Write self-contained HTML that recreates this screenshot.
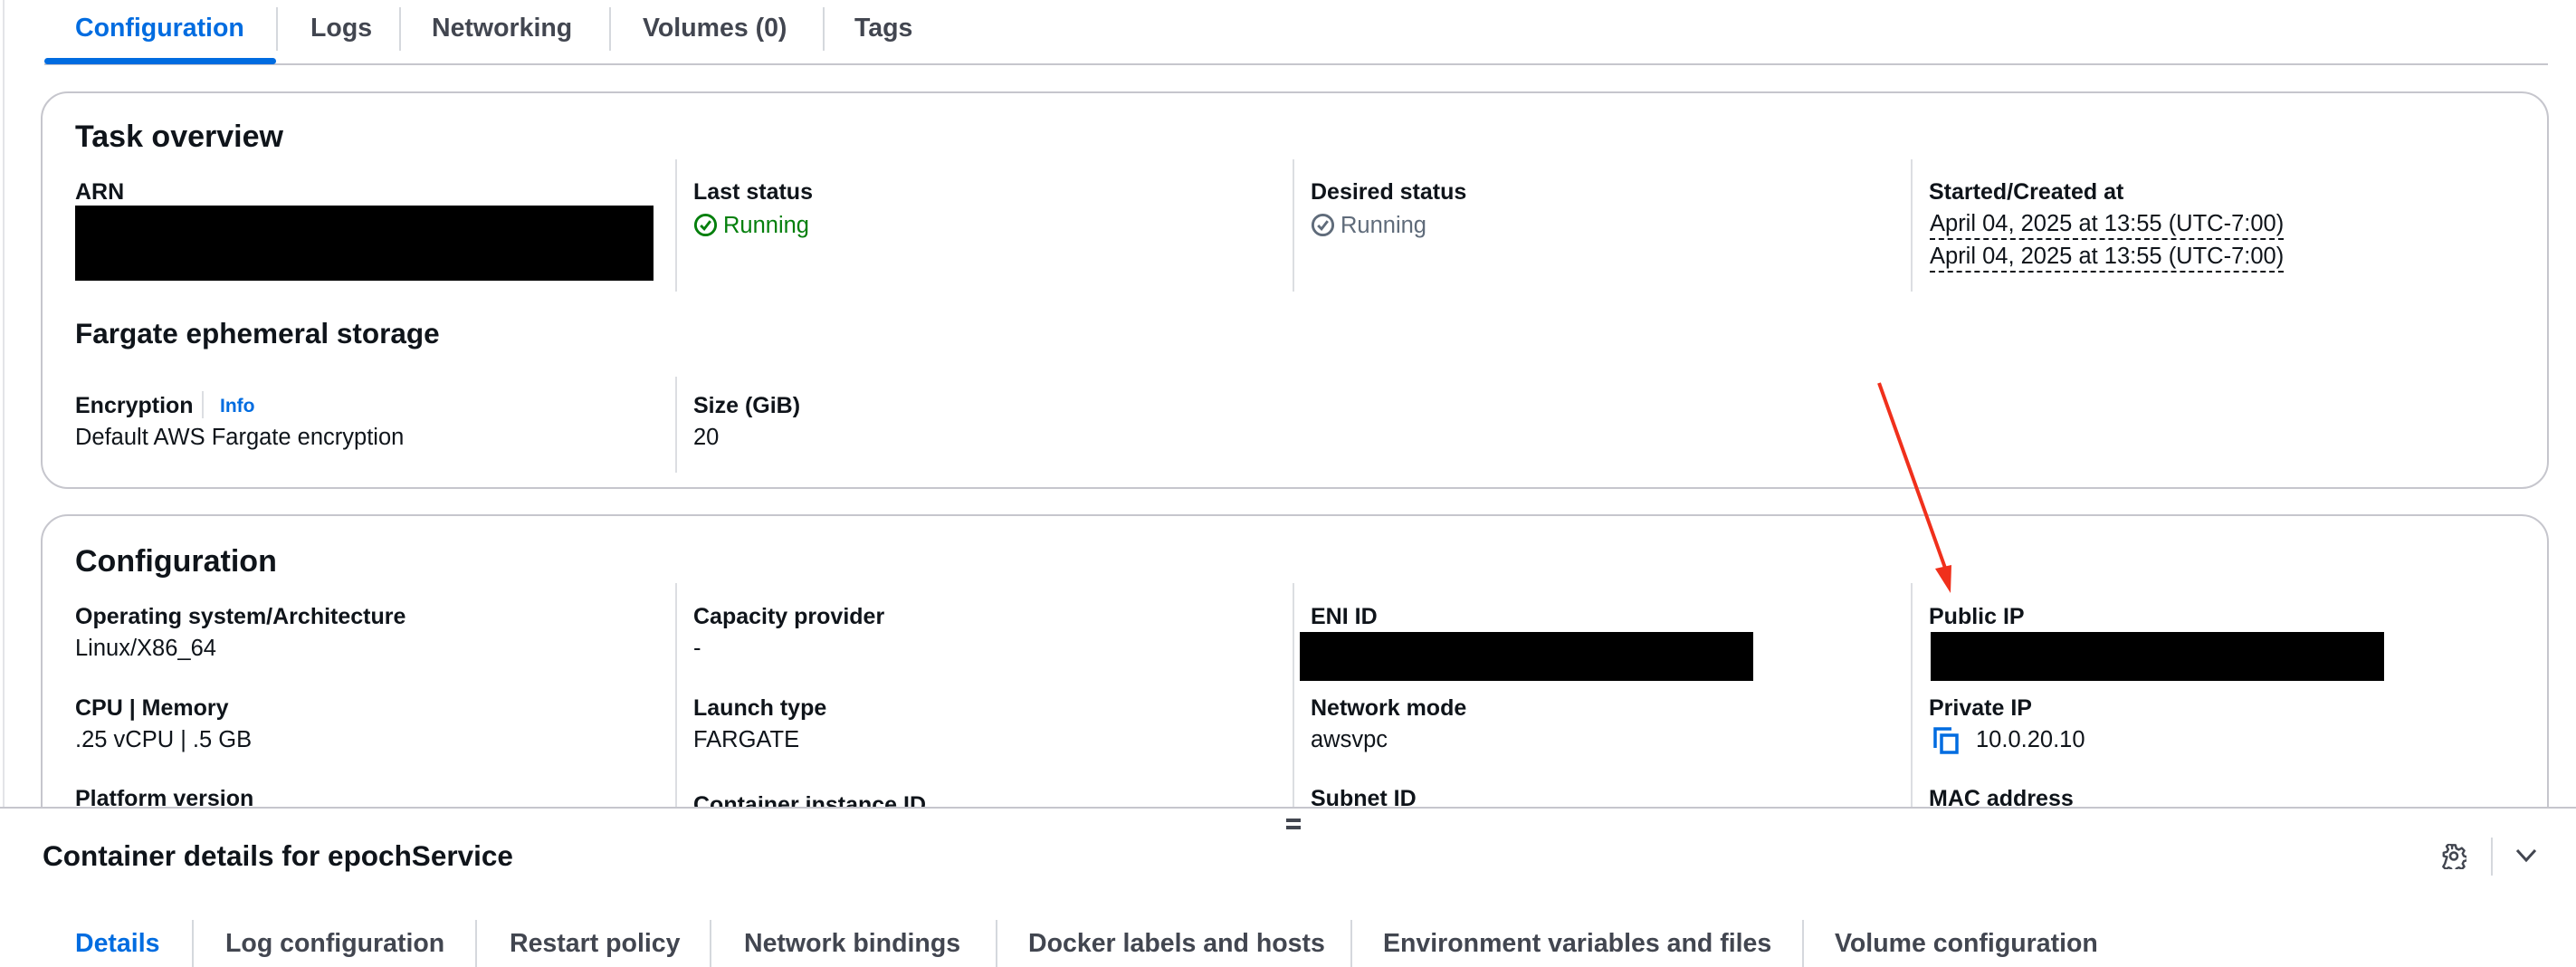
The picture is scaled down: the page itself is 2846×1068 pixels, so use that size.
<!DOCTYPE html>
<html><head><meta charset="utf-8"><style>
*{margin:0;padding:0;box-sizing:border-box}
body{width:2846px;height:1068px;overflow:hidden;background:#fff;font-family:"Liberation Sans",Arial,sans-serif;color:#0f141a;position:relative}
.a{position:absolute;white-space:nowrap;line-height:1}
.tab{font-size:28.5px;font-weight:bold;color:#424650;top:17px}
.sep{position:absolute;width:2px;background:#d5d8dd}
.card{position:absolute;border:2px solid #c6c6cd;border-radius:30px;background:#fff}
.h{font-size:34px;font-weight:bold}
.l{font-size:25px;font-weight:bold}
.v{font-size:25.5px}
.vd{position:absolute;width:2px;background:#dcdee2}
.blk{position:absolute;background:#000}
.dash{border-bottom:2px dashed #0f141a;padding-bottom:2px}
.bt{font-size:28.5px;font-weight:bold;color:#424650;top:1028px}
</style></head><body>
<div style="position:absolute;left:3px;top:0;width:2px;height:891px;background:#e3e4e8"></div>
<div class="a tab" style="left:83px;color:#006ce0">Configuration</div>
<div class="a tab" style="left:343px">Logs</div>
<div class="a tab" style="left:477px">Networking</div>
<div class="a tab" style="left:710px">Volumes (0)</div>
<div class="a tab" style="left:944px">Tags</div>
<div class="sep" style="left:305px;top:8px;height:48px"></div>
<div class="sep" style="left:441px;top:8px;height:48px"></div>
<div class="sep" style="left:673px;top:8px;height:48px"></div>
<div class="sep" style="left:909px;top:8px;height:48px"></div>
<div style="position:absolute;left:49px;top:70px;width:2766px;height:2px;background:#c6c6cd"></div>
<div style="position:absolute;left:49px;top:64px;width:256px;height:7px;border-radius:4px;background:#006ce0"></div>

<div class="card" style="left:45px;top:101px;width:2771px;height:439px"></div>
<div class="a h" style="left:83px;top:134px">Task overview</div>
<div class="vd" style="left:746px;top:176px;height:146px"></div>
<div class="vd" style="left:1428px;top:176px;height:146px"></div>
<div class="vd" style="left:2111px;top:176px;height:146px"></div>
<div class="a l" style="left:83px;top:200px">ARN</div>
<div class="blk" style="left:83px;top:227px;width:639px;height:83px"></div>
<div class="a l" style="left:766px;top:200px">Last status</div>
<div class="a v" style="left:766px;top:235px;color:#037f0c"><svg width="27" height="27" viewBox="0 0 28 28" style="vertical-align:-5px;margin-right:6px"><circle cx="14" cy="14" r="11.5" fill="none" stroke="#037f0c" stroke-width="3"/><path d="M8.5 14.5l4 4 7-9" fill="none" stroke="#037f0c" stroke-width="3"/></svg>Running</div>
<div class="a l" style="left:1448px;top:200px">Desired status</div>
<div class="a v" style="left:1448px;top:235px;color:#5f6b7a"><svg width="27" height="27" viewBox="0 0 28 28" style="vertical-align:-5px;margin-right:6px"><circle cx="14" cy="14" r="11.5" fill="none" stroke="#5f6b7a" stroke-width="3"/><path d="M8.5 14.5l4 4 7-9" fill="none" stroke="#5f6b7a" stroke-width="3"/></svg>Running</div>
<div class="a l" style="left:2131px;top:200px">Started/Created at</div>
<div class="a v" style="left:2132px;top:235px"><span class="dash">April 04, 2025 at 13:55 (UTC-7:00)</span></div>
<div class="a v" style="left:2132px;top:271px"><span class="dash">April 04, 2025 at 13:55 (UTC-7:00)</span></div>
<div class="a h" style="left:83px;top:353px;font-size:31.5px">Fargate ephemeral storage</div>
<div class="vd" style="left:746px;top:416px;height:106px"></div>
<div class="a l" style="left:83px;top:436px">Encryption</div>
<div class="vd" style="left:223px;top:432px;height:30px"></div>
<div class="a" style="left:243px;top:438px;font-size:21px;font-weight:bold;color:#006ce0">Info</div>
<div class="a v" style="left:83px;top:471px">Default AWS Fargate encryption</div>
<div class="a l" style="left:766px;top:436px">Size (GiB)</div>
<div class="a v" style="left:766px;top:471px">20</div>

<div class="card" style="left:45px;top:568px;width:2771px;height:500px"></div>
<div class="a h" style="left:83px;top:603px">Configuration</div>
<div class="vd" style="left:746px;top:644px;height:250px"></div>
<div class="vd" style="left:1428px;top:644px;height:250px"></div>
<div class="vd" style="left:2111px;top:644px;height:250px"></div>
<div class="a l" style="left:83px;top:669px">Operating system/Architecture</div>
<div class="a v" style="left:83px;top:704px">Linux/X86_64</div>
<div class="a l" style="left:766px;top:669px">Capacity provider</div>
<div class="a v" style="left:766px;top:704px">-</div>
<div class="a l" style="left:1448px;top:669px">ENI ID</div>
<div class="blk" style="left:1436px;top:698px;width:501px;height:54px"></div>
<div class="a l" style="left:2131px;top:669px">Public IP</div>
<div class="blk" style="left:2133px;top:698px;width:501px;height:54px"></div>
<div class="a l" style="left:83px;top:770px">CPU | Memory</div>
<div class="a v" style="left:83px;top:805px">.25 vCPU | .5 GB</div>
<div class="a l" style="left:766px;top:770px">Launch type</div>
<div class="a v" style="left:766px;top:805px">FARGATE</div>
<div class="a l" style="left:1448px;top:770px">Network mode</div>
<div class="a v" style="left:1448px;top:805px">awsvpc</div>
<div class="a l" style="left:2131px;top:770px">Private IP</div>
<svg class="a" style="left:2135px;top:802px" width="32" height="32" viewBox="0 0 32 32"><path d="M3 24V3h18" fill="none" stroke="#006ce0" stroke-width="3.5"/><rect x="10" y="10" width="17" height="19" fill="none" stroke="#006ce0" stroke-width="3.5"/></svg>
<div class="a v" style="left:2183px;top:805px">10.0.20.10</div>
<div class="a l" style="left:83px;top:870px">Platform version</div>
<div class="a l" style="left:766px;top:877px">Container instance ID</div>
<div class="a l" style="left:1448px;top:870px">Subnet ID</div>
<div class="a l" style="left:2131px;top:870px">MAC address</div>

<svg class="a" style="left:0;top:0" width="2846" height="1068"><line x1="2076" y1="423" x2="2150" y2="630" stroke="#f0301c" stroke-width="4"/><polygon points="2138,628 2156,624 2155,655" fill="#f0301c"/></svg>

<div style="position:absolute;left:0;top:891px;width:2846px;height:177px;background:#fff;border-top:2px solid #c6c6cd"></div>
<div style="position:absolute;left:1421px;top:904px;width:16px;height:4px;background:#424650"></div>
<div style="position:absolute;left:1421px;top:912px;width:16px;height:4px;background:#424650"></div>
<div class="a" style="left:47px;top:930px;font-size:31.5px;font-weight:bold">Container details for epochService</div>
<svg class="a" style="left:2697px;top:932px" width="28" height="28" viewBox="0 0 28 28"><path d="M12 2h4l1 4 3 1.5 3.5-2 3 3-2 3.5 1.5 3 4 1v4l-4 1-1.5 3 2 3.5-3 3-3.5-2-3 1.5-1 4h-4l-1-4-3-1.5-3.5 2-3-3 2-3.5L6 16l-4-1v-4l4-1 1.5-3-2-3.5 3-3 3.5 2L12 6z" transform="scale(0.93) translate(1 -0.5)" fill="none" stroke="#424650" stroke-width="2.6" stroke-linejoin="round"/><circle cx="14" cy="13.5" r="4" fill="none" stroke="#424650" stroke-width="2.6"/></svg>
<div class="sep" style="left:2752px;top:925px;height:42px;width:2px"></div>
<svg class="a" style="left:2778px;top:936px" width="26" height="18" viewBox="0 0 26 18"><path d="M3 3l10 11 10-11" fill="none" stroke="#424650" stroke-width="3"/></svg>

<div class="a bt" style="left:83px;color:#006ce0">Details</div>
<div class="a bt" style="left:249px">Log configuration</div>
<div class="a bt" style="left:563px">Restart policy</div>
<div class="a bt" style="left:822px">Network bindings</div>
<div class="a bt" style="left:1136px">Docker labels and hosts</div>
<div class="a bt" style="left:1528px">Environment variables and files</div>
<div class="a bt" style="left:2027px">Volume configuration</div>
<div class="sep" style="left:212px;top:1016px;height:52px"></div>
<div class="sep" style="left:525px;top:1016px;height:52px"></div>
<div class="sep" style="left:784px;top:1016px;height:52px"></div>
<div class="sep" style="left:1100px;top:1016px;height:52px"></div>
<div class="sep" style="left:1492px;top:1016px;height:52px"></div>
<div class="sep" style="left:1991px;top:1016px;height:52px"></div>
</body></html>
